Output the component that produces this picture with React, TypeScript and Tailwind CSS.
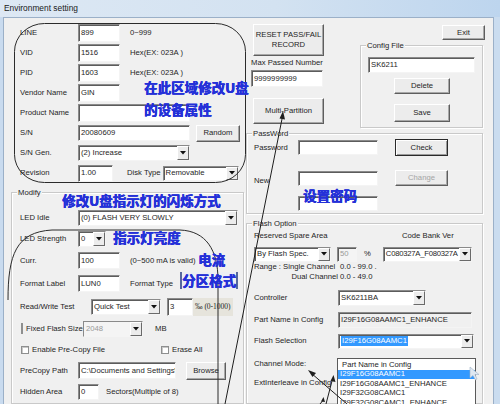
import React from "react";

const sunken =
  "bg-white border-t border-l border-b border-r border-t-[#8a8a8a] border-l-[#8a8a8a] border-b-[#f4f4f4] border-r-[#f4f4f4] shadow-[inset_1px_1px_0_#5c5c5c]";

function TB({ cls, v = "", dim = false }: { cls: string; v?: string; dim?: boolean }) {
  return (
    <div className={`flex items-center pl-[2px] overflow-hidden whitespace-nowrap ${sunken} ${cls} ${dim ? "text-[#9a9a9a]" : ""}`}>
      {v}
    </div>
  );
}

function Arrow() {
  return (
    <div className="w-[12px] h-full flex items-center justify-center bg-[#ececec] border-t border-l border-b border-r border-t-white border-l-white border-b-[#6a6a6a] border-r-[#6a6a6a]">
      <svg width="6" height="4" viewBox="0 0 6 4">
        <polygon points="0,0 6,0 3,3.5" fill="#111" />
      </svg>
    </div>
  );
}

function Combo({ cls, v = "", dim = false, hl = false, tight = false }: { cls: string; v?: string; dim?: boolean; hl?: boolean; tight?: boolean }) {
  return (
    <div className={`flex items-stretch ${sunken} ${cls}`}>
      <div className={`flex-1 flex items-center pl-[2px] overflow-hidden whitespace-nowrap ${tight ? "tracking-[-0.25px] pl-[1px]" : ""} ${dim ? "text-[#9a9a9a] bg-[#f4f4f4]" : ""}`}>
        {hl ? <span className="bg-[#3399ff] text-white px-[1px] leading-[10px]">{v}</span> : v}
      </div>
      <Arrow />
    </div>
  );
}

function Btn({ cls, children, dim = false, def = false }: { cls: string; children: React.ReactNode; dim?: boolean; def?: boolean }) {
  return (
    <div
      className={`flex items-center justify-center text-center leading-[10px] bg-[#ececec] border ${
        def
          ? "border-[#2a2a2a] shadow-[inset_1px_1px_0_#fff,inset_-1px_-1px_0_#9a9a9a]"
          : "border-t-white border-l-white border-b-[#5e5e5e] border-r-[#5e5e5e] shadow-[inset_-1px_-1px_0_#a8a8a8]"
      } ${dim ? "text-[#a5a5a5]" : ""} ${cls}`}
    >
      {children}
    </div>
  );
}

function Group({ cls, label, children }: { cls: string; label: string; children?: React.ReactNode }) {
  return (
    <div className={`relative border border-[#c9c9c9] shadow-[inset_1px_1px_0_#fff,1px_1px_0_#fff] ${cls}`}>
      <span className="absolute -top-[5px] left-[5px] px-[1px] bg-[#f0f0f0] leading-[9px]">{label}</span>
      {children}
    </div>
  );
}

function Check() {
  return <span className="w-[8px] h-[8px] bg-white border border-[#8e8f8f] shadow-[inset_1px_1px_0_#c8c8c8]" />;
}

function Row({ label, children }: { label: string; children?: React.ReactNode }) {
  return (
    <div className="flex items-center h-[20px] pl-[17px]">
      <span className="w-[58px] whitespace-nowrap">{label}</span>
      {children}
    </div>
  );
}

const cjk =
  "font-['Noto_Sans_CJK_SC','Noto_Sans',sans-serif] font-bold text-[#2430d8] leading-none whitespace-nowrap [text-shadow:0.4px_0_0_#2430d8,0_0.3px_0_#2430d8]";

export default function App() {
  return (
    <div className="relative w-[500px] h-[404px] overflow-hidden bg-[#c9dbef] font-['Liberation_Sans',Arial,sans-serif] text-[7.7px] leading-none text-[#1e1e1e]">
      <div className="h-[17px] flex items-center pl-[4px] text-[8.4px] text-[#1a1a1a] bg-[linear-gradient(to_right,#dde8f4,#d3e2f1_55%,#bdd5ee)]">
        Environment setting
      </div>
      <div className="ml-[3px] w-[490px] h-[387px] bg-[#f0f0f0] flex shadow-[inset_1px_1px_0_#9bb0c8]">
        {/* LEFT COLUMN */}
        <div className="w-[243px] flex flex-col">
          <div className="pt-[6px]">
            <Row label="LINE">
              <TB cls="w-[42px] h-[18px]" v="899" />
              <span className="ml-[10px]">0~999</span>
            </Row>
            <Row label="VID">
              <TB cls="w-[42px] h-[18px]" v="1516" />
              <span className="ml-[10px]">Hex(EX: 023A )</span>
            </Row>
            <Row label="PID">
              <TB cls="w-[42px] h-[18px]" v="1603" />
              <span className="ml-[10px]">Hex(EX: 023A )</span>
            </Row>
            <Row label="Vendor Name">
              <TB cls="w-[42px] h-[18px]" v="GIN" />
            </Row>
            <Row label="Product Name">
              <TB cls="w-[112px] h-[18px]" />
            </Row>
            <Row label="S/N">
              <TB cls="w-[112px] h-[16px]" v="20080609" />
              <Btn cls="ml-[6px] w-[44px] h-[17px]">Random</Btn>
            </Row>
            <Row label="S/N Gen.">
              <Combo cls="w-[112px] h-[16px]" v="(2) Increase" />
            </Row>
            <Row label="Revision">
              <TB cls="w-[35px] h-[17px]" v="1.00" />
              <span className="ml-[14px] whitespace-nowrap">Disk Type</span>
              <Combo cls="ml-[2px] w-[76px] h-[15px]" v="Removable" />
            </Row>
          </div>
          <Group cls="mt-[9px] ml-[8px] w-[233px] h-[230px]" label="Modify">
            <div className="pt-[15px] pl-[8px]">
              <div className="flex items-center h-[20px]">
                <span className="w-[58px]">LED Idle</span>
                <Combo cls="w-[160px] h-[16px]" v="(0) FLASH VERY SLOWLY" />
              </div>
              <div className="flex items-center h-[21px]">
                <span className="w-[58px]">LED Strength</span>
                <Combo cls="w-[28px] h-[16px]" v="0" />
              </div>
              <div className="flex items-center h-[23px]">
                <span className="w-[58px]">Curr.</span>
                <TB cls="w-[42px] h-[17px]" v="100" />
                <span className="ml-[10px] whitespace-nowrap">(0~500 mA is valid)</span>
              </div>
              <div className="flex items-center h-[23px]">
                <span className="w-[58px]">Format Label</span>
                <TB cls="w-[42px] h-[17px]" v="LUN0" />
                <span className="ml-[10px] whitespace-nowrap">Format Type</span>
              </div>
              <div className="flex items-center h-[23px]">
                <span className="w-[71px] whitespace-nowrap">Read/Write Test</span>
                <Combo cls="w-[70px] h-[16px]" v="Quick Test" />
                <TB cls="ml-[6px] w-[26px] h-[18px]" v="3" />
                <span className="h-[18px] flex items-center pl-[2px] pr-[2px] bg-[#e6e4dc] font-['Liberation_Serif',serif] text-[7.5px] whitespace-nowrap">‰ (0-1000)</span>
              </div>
              <div className="flex items-center h-[21px]">
                <span className="ml-[1px]"><Check /></span>
                <span className="ml-[3px] w-[57px] whitespace-nowrap">Fixed Flash Size</span>
                <Combo cls="w-[60px] h-[16px]" v="2048" dim />
                <span className="ml-[12px]">MB</span>
              </div>
              <div className="flex items-center h-[21px]">
                <div className="ml-[1px] w-[140px] flex items-center">
                  <Check />
                  <span className="ml-[3px] whitespace-nowrap">Enable Pre-Copy File</span>
                </div>
                <Check />
                <span className="ml-[3px] whitespace-nowrap">Erase All</span>
              </div>
              <div className="flex items-center h-[21px]">
                <span className="w-[58px]">PreCopy Path</span>
                <TB cls="w-[98px] h-[17px]" v="C:\Documents and Settings\" />
                <Btn cls="ml-[10px] w-[40px] h-[18px]">Browse</Btn>
              </div>
              <div className="flex items-center h-[22px]">
                <span className="w-[58px]">Hidden Area</span>
                <TB cls="w-[21px] h-[16px]" v="0" />
                <span className="ml-[7px] whitespace-nowrap">Sectors(Multiple of 8)</span>
              </div>
            </div>
          </Group>
        </div>

        {/* RIGHT COLUMN */}
        <div className="w-[247px] flex flex-col">
          <div className="flex h-[121px]">
            <div className="w-[114px] pl-[7px] pt-[7px] flex flex-col">
              <Btn cls="w-[71px] h-[32px]">
                RESET PASS/FAIL
                <br />
                RECORD
              </Btn>
              <span className="-ml-[2px] mt-[2px] h-[10px] flex items-center whitespace-nowrap">Max Passed Number</span>
              <TB cls="-ml-[2px] mt-[2px] w-[72px] h-[17px]" v="9999999999" />
              <Btn cls="mt-[11px] w-[71px] h-[26px]">Multi-Partition</Btn>
            </div>
            <div className="w-[124px] flex flex-col">
              <div className="pt-[8px] flex justify-end -mr-[1px]">
                <Btn cls="w-[43px] h-[15px]">Exit</Btn>
              </div>
              <Group cls="mt-[5px] w-[123px] h-[83px]" label="Config File">
                <div className="pt-[11px] pl-[7px] flex flex-col">
                  <TB cls="w-[107px] h-[16px]" v="SK6211" />
                  <Btn cls="mt-[5px] ml-[26px] w-[56px] h-[16px]">Delete</Btn>
                  <Btn cls="mt-[10px] ml-[26px] w-[56px] h-[18px]">Save</Btn>
                </div>
              </Group>
            </div>
          </div>

          <Group cls="mt-[1px] w-[237px] h-[84px]" label="PassWord">
            <div className="pl-[7px] pt-[5px]">
              <div className="flex items-center h-[17px]">
                <span className="w-[44px]">Password</span>
                <TB cls="w-[80px] h-[15px]" />
                <Btn cls="ml-[17px] w-[53px] h-[17px]" def>Check</Btn>
              </div>
              <div className="mt-[14px] flex items-center h-[16px]">
                <span className="w-[44px] pt-[5px]">New</span>
                <TB cls="w-[80px] h-[15px]" />
                <Btn cls="ml-[17px] w-[53px] h-[16px]" dim>Change</Btn>
              </div>
              <TB cls="mt-[10px] ml-[44px] w-[80px] h-[15px]" />
            </div>
          </Group>

          <Group cls="mt-[9px] w-[237px] h-[190px]" label="Flash Option">
            <div className="pl-[7px] pt-[7px]">
              <div className="flex items-center h-[10px]">
                <span className="w-[148px] whitespace-nowrap">Reserved Spare Area</span>
                <span className="whitespace-nowrap">Code Bank Ver</span>
              </div>
              <div className="mt-[6px] flex items-center h-[15px]">
                <Combo cls="w-[77px] h-[15px]" v="By Flash Spec." />
                <TB cls="ml-[6px] w-[20px] h-[15px] !bg-[#f4f4f4]" v="50" dim />
                <span className="ml-[7px]">%</span>
                <Combo cls="ml-[12px] w-[89px] h-[15px]" v="C080327A_F080327A" tight />
              </div>
              <div className="flex items-center h-[10px] whitespace-nowrap">
                <span className="w-[84px]">Range : Single Channel</span>
                <span className="ml-[2px]">0.0 - 99.0 .</span>
              </div>
              <div className="flex items-center h-[10px] whitespace-nowrap">
                <span className="w-[84px] text-right">Dual Channel</span>
                <span className="ml-[2px]">0.0 - 49.0</span>
              </div>
              <div className="mt-[8px] flex items-center h-[16px]">
                <span className="w-[84px]">Controller</span>
                <Combo cls="w-[88px] h-[16px]" v="SK6211BA" />
              </div>
              <div className="mt-[6px] flex items-center h-[16px]">
                <span className="w-[84px] whitespace-nowrap">Part Name in Config</span>
                <TB cls="w-[134px] h-[16px] !bg-[#f0f0f0]" v="I29F16G08AAMC1_ENHANCE" />
              </div>
              <div className="mt-[6px] flex items-center h-[15px]">
                <span className="w-[84px] whitespace-nowrap">Flash Selection</span>
                <Combo cls="w-[136px] h-[15px]" v="I29F16G08AAMC1" hl />
              </div>
              <div className="mt-[10px] flex items-center h-[10px]">Channel Mode:</div>
              <div className="mt-[9px] flex items-center h-[10px] whitespace-nowrap">ExtInterleave in Config</div>
            </div>
          </Group>
        </div>
      </div>

      {/* right window frame */}
      <div className="absolute right-0 top-[17px] w-[7px] h-[387px] bg-[#cadcef] border-l border-[#9bb0c8]" />

      {/* dropdown list */}
      <div className="absolute left-[337px] top-[358px] w-[139px] h-[50px] bg-white border border-[#5a5a5a] pt-[1px]">
        <div className="h-[9.5px] flex items-center pl-[4px]">Part Name in Config</div>
        <div className="h-[9.5px] flex items-center pl-[2px] bg-[#3399ff] text-white">I29F16G08AAMC1</div>
        <div className="h-[9.5px] flex items-center pl-[2px]">I29F16G08AAMC1_ENHANCE</div>
        <div className="h-[9.5px] flex items-center pl-[2px]">I29F32G08CAMC1</div>
        <div className="h-[9.5px] flex items-center pl-[2px]">I29F32G08CAMC1_ENHANCE</div>
      </div>

      {/* format type annotation box */}
      <div className="absolute left-[180px] top-[272px] w-[58px] h-[17px] bg-[#eceef4] border-l-2 border-r-2 border-[#56679e]" />

      {/* annotation drawings */}
      <svg className="absolute left-0 top-0 pointer-events-none" width="500" height="404" viewBox="0 0 500 404">
        <rect x="14.5" y="23.5" width="231" height="159" rx="30" ry="28" fill="none" stroke="#2b2b2b" strokeWidth="1" />
        <path d="M 8 300 C 8 255, 16 232, 52 230 L 180 230 C 206 231, 218 250, 218 280 L 218 404" fill="none" stroke="#2b2b2b" strokeWidth="1" />
        <line x1="282.6" y1="116" x2="225" y2="404" stroke="#1e1e1e" strokeWidth="1" />
        <polygon points="283,111 285,119.5 279.5,118.5" fill="#1e1e1e" />
        <line x1="311" y1="373" x2="347" y2="404" stroke="#1e1e1e" strokeWidth="1" />
        <polygon points="308,370 316,373 312.5,377" fill="#1e1e1e" />
        <line x1="332.5" y1="379" x2="326" y2="404" stroke="#1e1e1e" strokeWidth="1" />
        <polygon points="333.5,375 335.5,382 330.5,381" fill="#1e1e1e" />
        <line x1="322.5" y1="401" x2="320" y2="404" stroke="#1e1e1e" strokeWidth="1" />
        <polygon points="323.5,397 325,402 321,401.5" fill="#1e1e1e" />
        <polygon points="470,367 470,378 473,375.5 475.5,380 477,379 475,374.5 479,374.5" fill="#dfe8f2" stroke="#9fb2c6" strokeWidth="0.6" />
      </svg>

      {/* chinese annotations */}
      <span className={`absolute left-[144px] top-[81px] text-[13.5px] ${cjk}`}>在此区域修改U盘</span>
      <span className={`absolute left-[144px] top-[103px] text-[13.5px] ${cjk}`}>的设备属性</span>
      <span className={`absolute left-[62px] top-[194px] text-[13.5px] ${cjk}`}>修改U盘指示灯的闪烁方式</span>
      <span className={`absolute left-[113px] top-[231px] text-[13.5px] ${cjk}`}>指示灯亮度</span>
      <span className={`absolute left-[198px] top-[253px] text-[13.5px] ${cjk}`}>电流</span>
      <span className={`absolute left-[182px] top-[274px] text-[13.5px] ${cjk}`}>分区格式</span>
      <span className={`absolute left-[303px] top-[189px] text-[13.5px] ${cjk}`}>设置密码</span>
    </div>
  );
}
